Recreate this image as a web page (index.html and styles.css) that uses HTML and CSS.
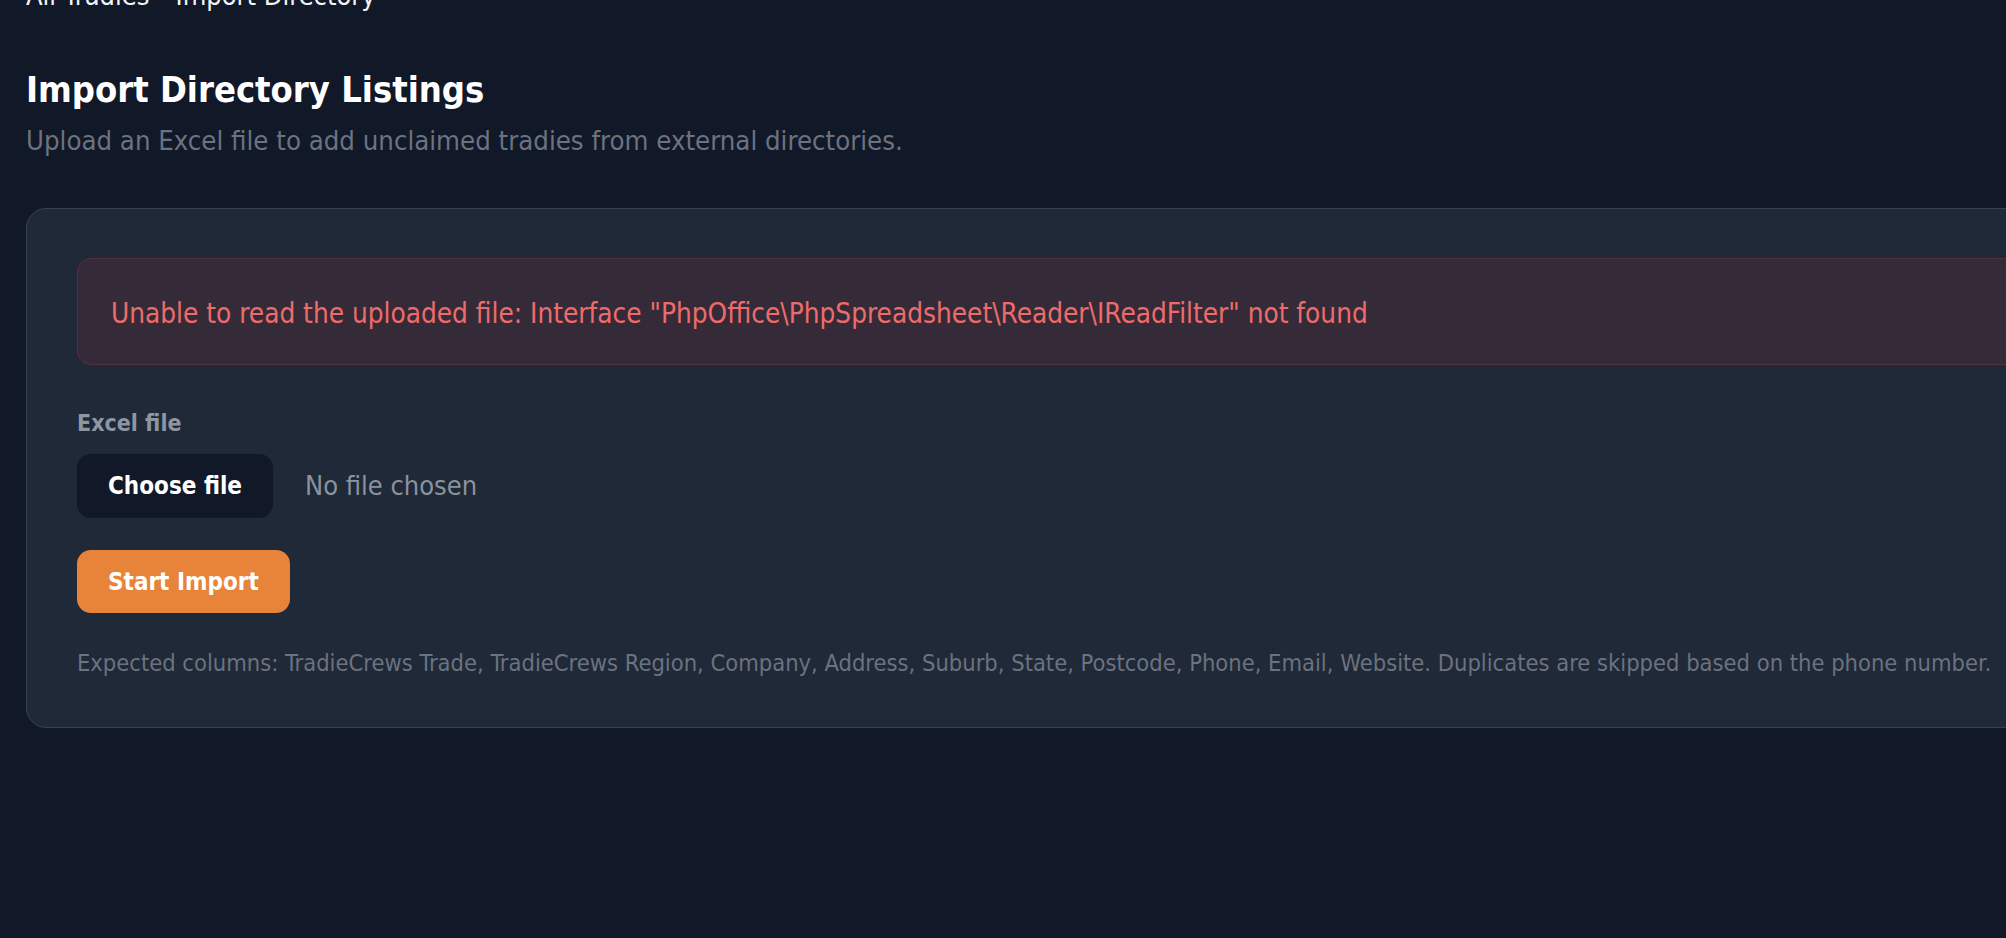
FILE: index.html
```html
<!DOCTYPE html>
<html lang="en">
<head>
<meta charset="utf-8">
<title>Import Directory Listings</title>
<link rel="stylesheet" href="styles.css">
</head>
<body>
<main class="page">
  <nav class="crumbs"><span>All Tradies</span><span class="sep">–</span><span>Import Directory</span></nav>
  <header class="intro">
    <h1 class="title">Import Directory Listings</h1>
    <p class="subtitle">Upload an Excel file to add unclaimed tradies from external directories.</p>
  </header>
  <section class="card">
    <div class="alert">Unable to read the uploaded file: Interface "PhpOffice\PhpSpreadsheet\Reader\IReadFilter" not found</div>
    <form class="form">
      <label class="label">Excel file</label>
      <div class="file-row">
        <span class="file-btn">Choose file</span>
        <span class="file-name">No file chosen</span>
      </div>
      <div class="actions"><button type="button" class="submit">Start Import</button></div>
      <p class="hint">Expected columns: TradieCrews Trade, TradieCrews Region, Company, Address, Suburb, State, Postcode, Phone, Email, Website. Duplicates are skipped based on the phone number.</p>
    </form>
  </section>
</main>
</body>
</html>
```

FILE: styles.css
```css
html, body {
  margin: 0;
  padding: 0;
  background: #111827;
  overflow: hidden;
}
body {
  font-family: "DejaVu Sans Condensed", "DejaVu Sans", sans-serif;
  font-stretch: condensed;
  color: #f3f4f6;
}
.page {
  padding: 0 26px;
}
.crumbs {
  margin-top: -22px;
  font-size: 27px;
  line-height: 36px;
  color: #f3f4f6;
  display: flex;
}
.crumbs .sep {
  margin: 0 2px 0 12px;
  color: #d1d5db;
}
.intro {
  margin-top: 56px;
}
.title {
  margin: 0;
  font-size: 36px;
  line-height: 40px;
  font-weight: 700;
  color: #ffffff;
}
.subtitle {
  margin: 13px 0 0;
  font-size: 27.3px;
  line-height: 36px;
  color: #6b7280;
}
.card {
  margin-top: 49px;
  width: max-content;
  min-width: 2040px;
  background: #1f2937;
  border: 1px solid #374151;
  border-radius: 20px;
  padding: 49px 50px 48px;
}
.alert {
  background: #352b38;
  border: 1px solid #5a2e37;
  border-radius: 14px;
  padding: 37px 33px 32px;
  font-size: 27.7px;
  line-height: 36px;
  color: #ef6b6b;
}
.form {
  display: flex;
  flex-direction: column;
}
.label {
  margin-top: 43px;
  font-size: 23px;
  line-height: 30px;
  font-weight: 700;
  color: #8e96a3;
}
.file-row {
  margin-top: 16px;
  display: flex;
  align-items: center;
  gap: 32px;
}
.file-btn {
  display: inline-flex;
  align-items: center;
  height: 64px;
  padding: 0 31px;
  background: #111827;
  border-radius: 14px;
  font-size: 24px;
  font-weight: 700;
  color: #ffffff;
}
.file-name {
  font-size: 27px;
  line-height: 36px;
  color: #8b929e;
}
.actions {
  margin-top: 32px;
  display: flex;
}
.submit {
  height: 63px;
  padding: 0 31px;
  border: 0;
  border-radius: 14px;
  background: #e8833a;
  font-family: inherit;
  font-stretch: condensed;
  font-size: 24px;
  font-weight: 700;
  color: #ffffff;
}
.hint {
  margin: 34px 0 0;
  font-size: 23.5px;
  line-height: 32px;
  color: #6b7280;
  white-space: nowrap;
}
```
